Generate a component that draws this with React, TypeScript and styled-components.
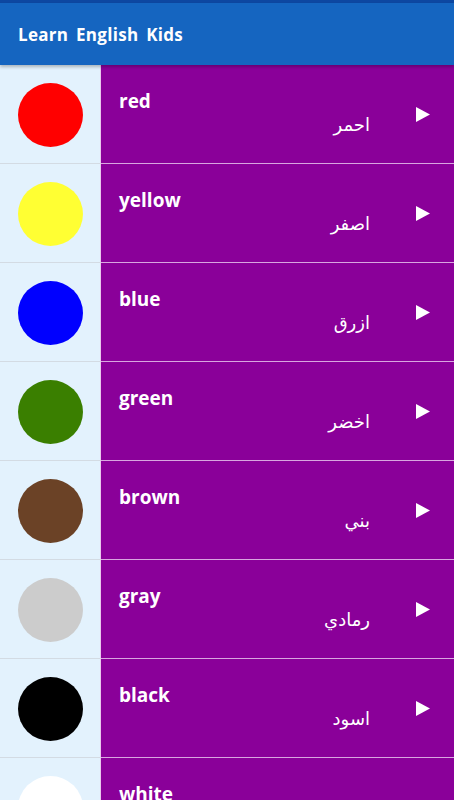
import React from "react";
import styled, { createGlobalStyle } from "styled-components";

const Global = createGlobalStyle`
  html, body { margin: 0; padding: 0; background: #ffffff; }
  body { font-family: "DejaVu Sans", sans-serif; overflow: hidden; }
`;

const Page = styled.div`
  width: 454px;
  height: 800px;
  overflow: hidden;
  display: flex;
  flex-direction: column;
`;

const StatusStrip = styled.div`
  height: 3px;
  background: #0d47a1;
  flex: none;
`;

const AppBar = styled.header`
  height: 62px;
  background: #1565c0;
  display: flex;
  align-items: center;
  padding-left: 18px;
  flex: none;
  box-shadow: 0 2px 3px rgba(0, 0, 0, 0.25);
  position: relative;
  z-index: 1;
`;

const Title = styled.h1`
  margin: 0;
  color: #ffffff;
  font-family: "Comic Sans MS", "Open Sans", sans-serif;
  font-weight: 700;
  font-size: 17px;
  letter-spacing: 0.3px;
  word-spacing: 3px;
`;

const List = styled.div`
  display: flex;
  flex-direction: column;
`;

const Row = styled.div`
  display: flex;
  height: 99px;
  flex: none;
`;

const Swatch = styled.div`
  width: 101px;
  box-sizing: border-box;
  background: #e3f2fd;
  border-bottom: 1px solid #d3dbe3;
  border-right: 1px solid #e8c8ee;
  display: flex;
  align-items: center;
  justify-content: center;
  padding-top: 1px;
`;

const Dot = styled.div<{ $c: string }>`
  width: 65px;
  height: 64px;
  border-radius: 50%;
  background: ${(p) => p.$c};
`;

const Panel = styled.div`
  flex: 1;
  box-sizing: border-box;
  background: #8a0099;
  border-bottom: 1px solid #d9a6e0;
  display: flex;
  align-items: center;
  padding-right: 24px;
`;

const Words = styled.div`
  flex: 1;
  display: flex;
  flex-direction: column;
  padding-left: 18px;
  padding-right: 46px;
  margin-top: -3px;
`;

const English = styled.div`
  color: #ffffff;
  font-family: "Comic Sans MS", "Open Sans", sans-serif;
  font-weight: 700;
  font-size: 19px;
  line-height: 24px;
`;

const Arabic = styled.div`
  color: #ffffff;
  font-family: "DejaVu Sans", sans-serif;
  font-size: 18px;
  line-height: 24px;
  text-align: right;
  direction: rtl;
  margin-top: 0px;
`;

const Play = styled.svg`
  width: 14px;
  height: 15px;
  flex: none;
`;

const colors = [
  { en: "red", ar: "احمر", c: "#ff0000" },
  { en: "yellow", ar: "اصفر", c: "#ffff33" },
  { en: "blue", ar: "ازرق", c: "#0000ff" },
  { en: "green", ar: "اخضر", c: "#3a7f00" },
  { en: "brown", ar: "بني", c: "#6b4226" },
  { en: "gray", ar: "رمادي", c: "#cccccc" },
  { en: "black", ar: "اسود", c: "#000000" },
  { en: "white", ar: "ابيض", c: "#ffffff" },
];

export default function App() {
  return (
    <Page>
      <Global />
      <StatusStrip />
      <AppBar>
        <Title>Learn English Kids</Title>
      </AppBar>
      <List>
        {colors.map((item) => (
          <Row key={item.en}>
            <Swatch>
              <Dot $c={item.c} />
            </Swatch>
            <Panel>
              <Words>
                <English>{item.en}</English>
                <Arabic>{item.ar}</Arabic>
              </Words>
              <Play viewBox="0 0 14 15">
                <polygon points="0,0 14,7.5 0,15" fill="#ffffff" />
              </Play>
            </Panel>
          </Row>
        ))}
      </List>
    </Page>
  );
}
